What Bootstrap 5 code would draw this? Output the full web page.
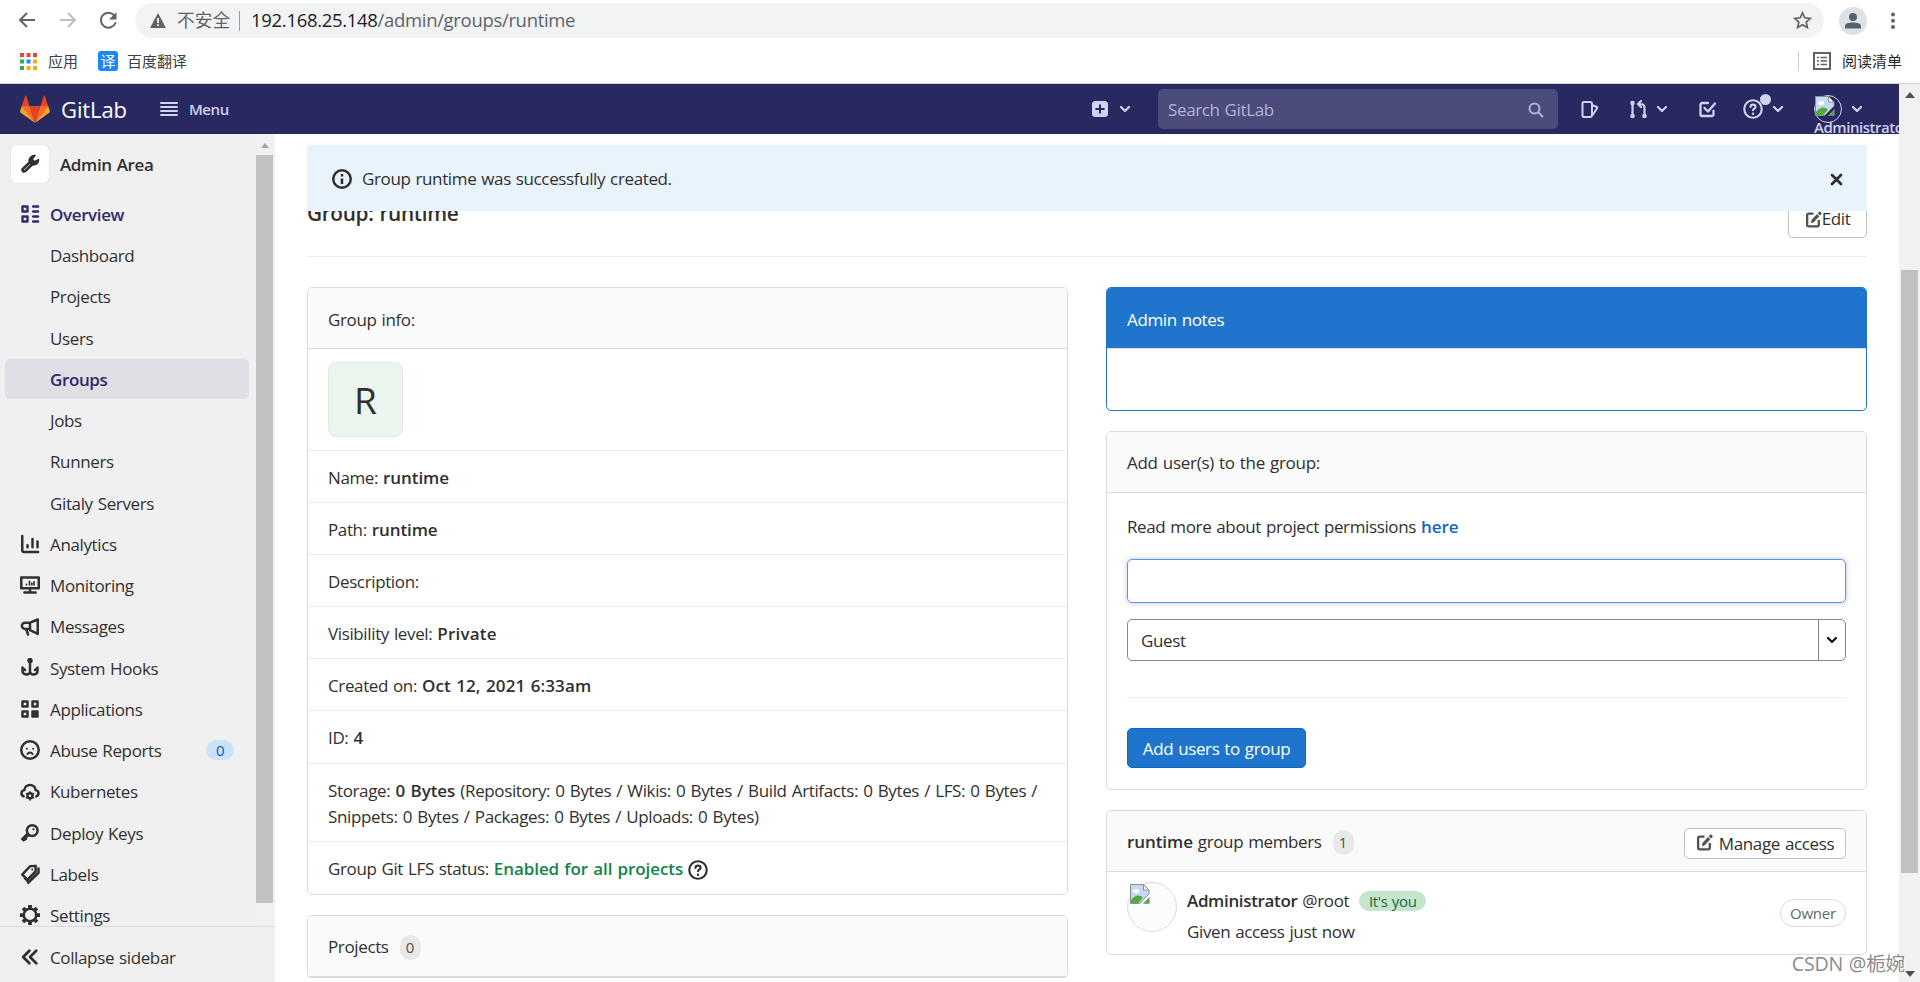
<!DOCTYPE html>
<html lang="en">
<head>
<meta charset="utf-8">
<title>runtime · Groups · Admin Area · GitLab</title>
<link href="https://cdn.jsdelivr.net/npm/bootstrap@5.3.0/dist/css/bootstrap.min.css" rel="stylesheet">
<style>
html,body{height:982px;overflow:hidden}
body{font-family:"Open Sans","Noto Sans CJK SC",sans-serif;font-size:17px;line-height:26.25px;letter-spacing:-.37px;word-spacing:.9px;color:#303030;background:#fff}
svg{display:block;flex:none}
.ln{fill:none;stroke:currentColor;stroke-width:2;stroke-linecap:round;stroke-linejoin:round}
b,.semi{font-weight:600}
b{letter-spacing:-.08px}
/* browser chrome */
.chrome-top{height:84px;border-bottom:1px solid #d4d5d8;color:#5f6368}
.tools{height:41px;padding:0 17px 0 17px}
.omni{height:35px;margin-left:16px;border-radius:18px;background:#f1f3f4;width:1689px;padding:0 12px 0 15px;font-size:18.5px;letter-spacing:-.32px}
.omni .host{color:#202124}
.omni-sep{width:1px;height:20px;background:#9a9ea2;margin:0 11px 0 9px}
.marks{height:40px;font-size:15px;color:#3c4043;letter-spacing:0;padding-left:20px;padding-right:18px}
.yi{width:20px;height:20px;border-radius:3px;background:#1a88f8;color:#fff;font-size:15px;line-height:19px}
.who{width:28px;height:28px;border-radius:50%;background:#dee1e6;margin-left:15px;margin-right:24px}
/* top bar */
.topnav{height:50px;width:1899px;background:#292961;color:#d1d1f0;overflow:hidden;padding:0 0 0 20px}
.wordmark{color:#fff;font-size:22px;width:99px;margin-left:11px;letter-spacing:-.1px;padding-top:1px}
.menu-t{font-size:15px;font-weight:600;margin-left:11px;padding-top:1px;letter-spacing:-.45px}
.finder{width:400px;height:40px;border-radius:5px;background:#4b4b7c;color:#b4b4d8;padding:2px 14px 0 10px;margin-left:27px}
.userbox{width:28px;height:28px;margin-left:30px}
.round-av{width:28px;height:28px;border:1px solid #d1d1f0;border-radius:50%}
.usertxt{position:absolute;left:0;top:19px;font-size:15px;font-weight:600;letter-spacing:-.45px}
.dot{position:absolute;width:11px;height:11px;border-radius:50%;background:#d1d1f0;left:17px;top:-5px}
/* sidebar */
.side{width:275px;height:848px;background:#f0f0f0}
.side-scroll{height:792px;overflow:hidden}
.side-list{width:256px;padding-top:11px}
.ctx{padding-left:11px;margin-bottom:11px}
.ctx-ic{width:38px;height:38px;border-radius:5px;background:#fff;box-shadow:0 0 1px #bbb;margin-right:11px}
.it{height:40px;margin:0 7px 1.25px 5px;padding:2px 0 0 15px;border-radius:5px}
.it svg{margin-right:10px;margin-top:-2px}
.it.sub{padding-left:45px}
.it.here{background:#e0dfe5}
.act{color:#2f2a6b;font-weight:600}
.zero{margin-left:auto;margin-right:15px;width:28px;height:20px;border-radius:10px;background:#cbe2f9;color:#0b5cad;font-size:15px;line-height:20px;margin-top:-2px}
.sbar{width:19px;background:#f1f1f1;padding-right:2px}
.sbar i{display:block;height:748px;background:#c1c1c1;margin-top:7px}
.tri{width:0;height:0;border:4.5px solid transparent;border-top:0;border-bottom:5px solid #a3a3a3;margin:9px auto 0}
.fold{height:56px;border-top:1px solid #dbdbdb;padding-left:20px;padding-top:7px}
.fold svg{margin-top:-3px}
/* content */
.pagebody{width:1624px;padding:11px 32px 0 32px;height:848px;overflow:hidden}
.flash{height:66px;background:#e9f3fc;padding:2px 24px 0 25px;z-index:2;position:relative}
.titlerow{height:46px;border-bottom:1px solid #ececec;margin-bottom:30px}
.titlerow h3{font-size:20.8px;font-weight:600;margin:-12px 0 0;letter-spacing:-.35px;line-height:28px}
.editb{height:38px;width:79px;margin-top:-11px;border:1px solid #bfbfbf;border-radius:5px}
.box{border:1px solid #dbdbdb;border-radius:5px;background:#fff}
.boxh{height:61px;border-bottom:1px solid #dbdbdb;background:#fafafa;padding:0 20px;border-radius:4px 4px 0 0}
.boxh.t{padding-top:3.5px}
.cols{gap:38px}
.cl{width:761px}
.rw{border-bottom:1px solid #ececec;padding:14px 20px 0;height:52.2px;white-space:nowrap}
.rw:last-child{border-bottom:0}
.ava{width:75px;height:75px;border-radius:8px;border:1px solid #e6e6e6;background:#ecf4ee;font-size:37px;letter-spacing:0;padding-top:2px}
.pill{border-radius:12px;background:#e8e8e8;height:25px;width:21px;font-size:15px;margin-left:11px;letter-spacing:0;color:#525252}
.inp{height:44px;border:1px solid #5a94f0;border-radius:5px;box-shadow:0 0 5px rgba(60,80,120,.35)}
.sel{height:42px;border:1px solid #868686;border-radius:5px;margin-top:16px;padding-left:13px}
.sel span.ar{width:27px;border-left:1px solid #868686}
.addb{width:179px;height:40px;background:#1f75cb;color:#fff;border:1px solid #1068bf;border-radius:5px;margin-top:30px;padding-top:1px}
.manb{width:162px;height:31px;border:1px solid #bfbfbf;border-radius:5px;background:#fff;margin-top:5px}
.mav{width:50px;height:50px;border:1px solid #dcdcdc;border-radius:50%;background:#fcfcfc}
.you{height:20px;width:67px;border-radius:10px;background:#c3e6cd;color:#24663b;font-size:15px;margin-left:10px}
.own{width:66px;height:28px;border:1px solid #dbdbdb;border-radius:14px;font-size:15px;color:#666;margin-top:17px;letter-spacing:-.2px}
.wm{position:absolute;right:15px;bottom:5px;font-size:19.6px;color:#8b8b8b;text-shadow:1px 1px #fff;letter-spacing:-.2px;z-index:5}
.vbar{width:21px;background:#f1f1f1;height:898px;position:absolute;right:0;top:84px}
.vbar i{display:block;width:17px;height:603px;background:#c1c1c1;margin:172px 0 0 2px}
.tu,.td{width:0;height:0;border:5px solid transparent;margin-left:6px}
.tu{border-top:0;border-bottom:6px solid #505050;margin-top:8px}
.td{border-bottom:0;border-top:6px solid #505050;margin-top:98px}
</style>
</head>
<body>
<svg width="0" height="0" style="display:none">
<symbol id="chev" viewBox="0 0 12 8"><path class="ln" style="stroke-width:2.2px" d="M2 2l4 4 4-4"/></symbol>
<symbol id="help" viewBox="0 0 16 16"><g class="ln" style="stroke-width:1.7px"><circle cx="8" cy="8" r="7"/><path d="M6 6.400C6 5.200 6.900 4.500 8 4.500s2 .8 2 1.800C10 7.700 8 7.700 8 9"/></g><circle cx="8" cy="11.700" r="1" fill="currentColor"/></symbol>
<symbol id="pen" viewBox="0 0 16 16"><path class="ln" style="stroke-linecap:butt;stroke-width:2.2px" d="M8 2.500H3.500a1.500 1.500 0 0 0-1.500 1.500v9A1.500 1.500 0 0 0 3.500 14.500h8a1.500 1.500 0 0 0 1.500-1.500V8.500"/><path fill="currentColor" d="M5.500 11.500l.6-3L11.300 2.800l2.200 2.200-5.300 5.700zM12 2.100l1.200-1.300a.9.900 0 0 1 1.300 0l.9.900a.9.900 0 0 1 0 1.300l-1.200 1.300z"/></symbol>
<symbol id="broken" viewBox="0 0 20 20"><path fill="#c3d9f7" stroke="#8e8e8e" d="M.5.500h13l5.500 5.500v4l-9.500 9.500H.5z"/><ellipse cx="6" cy="7" rx="3.300" ry="2" fill="#fff"/><path fill="#53a93a" d="M1 19v-3c4-5 8-6 12-2.500L8.500 19z"/><path fill="#fff" stroke="#8e8e8e" d="M13.500.5V6H19z"/><path fill="#53a93a" stroke="#8e8e8e" stroke-width=".6" d="M19.300 13.500v6h-6z"/></symbol>
</svg>

<div class="chrome-top">
  <div class="tools d-flex align-items-center">
    <svg width="21" height="21" viewBox="0 0 21 21" class="ln"><path d="M18 10H3M10 3l-7 7 7 7" stroke-linecap="butt" stroke-linejoin="miter"/></svg>
    <svg width="21" height="21" viewBox="0 0 21 21" class="ln" style="color:#bdc1c6;margin-left:20px"><path d="M2 10h15M10 3l7 7-7 7" stroke-linecap="butt" stroke-linejoin="miter"/></svg>
    <svg width="21" height="21" viewBox="0 0 21 21" style="margin-left:19px"><path class="ln" stroke-linecap="butt" d="M16 5.200A7.500 7.500 0 1 0 17.400 13"/><path fill="#5f6368" d="M18.500 2v7.500H11z"/></svg>
    <div class="omni d-flex align-items-center">
      <svg width="16" height="15" viewBox="0 0 16 15"><path fill="#5f6368" d="M8 0l8 15H0z"/><path stroke="#f1f3f4" stroke-width="1.800" d="M8 5v5M8 11.300v1.700"/></svg>
      <span style="font-size:17.700px;letter-spacing:0;margin-left:11px">不安全</span><i class="omni-sep"></i>
      <span><span class="host">192.168.25.148</span>/admin/groups/runtime</span>
      <svg class="ms-auto" width="19" height="19" viewBox="0 0 19 19"><path fill="none" stroke="#5f6368" stroke-width="1.700" d="M9.500 1.800l2.300 5 5.500.6-4.100 3.700 1.200 5.400-4.900-2.800-4.900 2.800 1.200-5.400L1.700 7.400l5.500-.6z"/></svg>
    </div>
    <div class="who d-flex align-items-center justify-content-center"><svg width="16" height="16" viewBox="0 0 16 16" fill="#57606f"><circle cx="8" cy="4" r="4"/><path d="M0 15.500V13c0-2.500 4-3.600 8-3.600s8 1.100 8 3.600v2.500z"/></svg></div>
    <svg width="4" height="18" viewBox="0 0 4 18" fill="#5f6368"><circle cx="2" cy="2.500" r="2"/><circle cx="2" cy="8.800" r="2"/><circle cx="2" cy="15" r="2"/></svg>
  </div>
  <div class="marks d-flex align-items-center">
    <svg width="17" height="17" viewBox="0 0 17 17"><path fill="#ea4335" d="M0 0h4v4H0zM6.500 0h4v4h-4zM13 0h4v4h-4z"/><path fill="#34a853" d="M0 6.500h4v4H0zM0 13h4v4H0z"/><path fill="#1a88f8" d="M6.500 6.500h4v4h-4z"/><path fill="#fbab05" d="M13 6.500h4v4h-4zM6.500 13h4v4h-4zM13 13h4v4h-4z"/></svg>
    <span style="margin-left:11px">应用</span>
    <span class="yi d-flex align-items-center justify-content-center" style="margin-left:20px">译</span>
    <span style="margin-left:9px">百度翻译</span>
    <span class="vr ms-auto" style="height:20px;align-self:center;margin-right:14px"></span>
    <svg width="18" height="18" viewBox="0 0 18 18"><path fill="none" stroke="#5f6368" stroke-width="2" d="M1 1h16v16H1z"/><path stroke="#5f6368" stroke-width="1.500" d="M4 5.500h2M7.500 5.500H14M4 9h2M7.500 9H14M4 12.500h2M7.500 12.500H14"/></svg>
    <span class="text-dark" style="margin-left:11px">阅读清单</span>
  </div>
</div>

<nav class="topnav d-flex align-items-center">
  <svg width="30" height="28" viewBox="0 0 30 28"><path fill="#e24329" d="M15 28l5.500-17h-11z"/><path fill="#fc6d26" d="M15 28L9.500 11H1.800zM15 28l5.500-17h7.700z"/><path fill="#fca326" d="M1.800 11L.1 16.200c-.1.500 0 1 .4 1.300L15 28zM28.200 11l1.700 5.200c.1.500 0 1-.4 1.300L15 28z"/><path fill="#e24329" d="M1.800 11h7.700L6.200.8c-.2-.5-.9-.5-1 0zM28.200 11h-7.700L23.800.8c.2-.5.9-.5 1 0z"/></svg>
  <span class="wordmark">GitLab</span>
  <svg width="18" height="14" viewBox="0 0 18 14"><path stroke="currentColor" stroke-width="2" stroke-linecap="round" d="M1 1h16M1 5h16M1 9h16M1 13h16"/></svg>
  <span class="menu-t">Menu</span>
  <svg class="ms-auto" width="16" height="16" viewBox="0 0 16 16"><rect width="16" height="16" rx="3.500" fill="currentColor"/><path stroke="#292961" stroke-width="2" d="M8 3.500v9M3.500 8h9"/></svg>
  <svg width="12" height="8" style="margin-left:11px"><use href="#chev"/></svg>
  <div class="finder d-flex align-items-center justify-content-between"><span>Search GitLab</span><svg width="16" height="16" viewBox="0 0 16 16" class="ln"><circle cx="6.500" cy="6.500" r="5"/><path d="M10.500 10.500l4 4"/></svg></div>
  <svg width="19" height="19" viewBox="0 0 19 19" class="ln" style="margin-left:22px;margin-right:2px"><path d="M4 2h6a2 2 0 0 1 2 2v11a2 2 0 0 1-2 2H4a1.500 1.500 0 0 1-1.500-1.500v-12A1.500 1.500 0 0 1 4 2z"/><path d="M13 5.500l3.500 1.300c.8.300 1 .8.600 1.500L13 14.500"/></svg>
  <svg width="19" height="19" viewBox="0 0 19 19" class="ln" style="margin-left:28px"><path stroke-width="2.200" d="M3.500 4v11M15.500 14V8c0-2.500-1.500-4-4-4h-1M12 1L9 4l3 3"/><circle cx="3.500" cy="3" r="1.300"/><circle cx="3.500" cy="16" r="1.300"/><circle cx="15.500" cy="16" r="1.300"/></svg>
  <svg width="12" height="8" style="margin-left:8px"><use href="#chev"/></svg>
  <svg width="19" height="19" viewBox="0 0 19 19" class="ln" style="margin-left:30px"><path stroke-width="2.300" d="M10 3H4a1.500 1.500 0 0 0-1.500 1.500v10A1.500 1.500 0 0 0 4 16h10a1.500 1.500 0 0 0 1.500-1.500V11M6.500 8l3.500 3.500L17 3.500"/></svg>
  <span class="position-relative" style="margin-left:26px"><svg width="20" height="20"><use href="#help"/></svg><i class="dot"></i></span>
  <svg width="12" height="8" style="margin-left:9px"><use href="#chev"/></svg>
  <span class="userbox position-relative"><span class="round-av d-block"><svg width="20" height="20"><use href="#broken"/></svg></span><span class="usertxt">Administrator</span></span>
  <svg width="12" height="8" style="margin:0 36px 0 9px"><use href="#chev"/></svg>
</nav>

<div class="d-flex">
  <aside class="side">
    <div class="side-scroll d-flex justify-content-between">
      <div class="side-list">
        <div class="ctx d-flex align-items-center semi"><span class="ctx-ic d-flex align-items-center justify-content-center"><svg width="20" height="20" viewBox="0 0 16 16"><path class="ln" d="M7.500 7L2.600 11.600c-.8.800-.8 1.400-.2 2s1.300.6 2-.2L9.200 8.800"/><path fill="currentColor" d="M9 1.300c1.300-.8 2.700-.8 3.900-.3L10.500 4l1.200 1.400 3.600-1.900c.5 2.200-.5 4.500-2.400 5.300s-3.200.6-3.900.2L6.700 6.700C6.300 4.500 7.300 2.300 9 1.300z"/></svg></span><span style="padding-top:2px">Admin Area</span></div>
        <div class="it d-flex align-items-center act"><svg width="20" height="20" viewBox="0 0 16 16" class="ln"><path d="M2 2h4v4H2zM2 10h4v4H2zM10.500 2h4M10.500 6h4M10.500 10h4M10.500 14h4" stroke-width="1.900"/></svg>Overview</div>
        <div class="it sub d-flex align-items-center">Dashboard</div>
        <div class="it sub d-flex align-items-center">Projects</div>
        <div class="it sub d-flex align-items-center">Users</div>
        <div class="it sub here d-flex align-items-center act">Groups</div>
        <div class="it sub d-flex align-items-center">Jobs</div>
        <div class="it sub d-flex align-items-center">Runners</div>
        <div class="it sub d-flex align-items-center">Gitaly Servers</div>
        <div class="it d-flex align-items-center"><svg width="20" height="20" viewBox="0 0 16 16" class="ln"><path d="M1.800 1.500V13a1.300 1.300 0 0 0 1.300 1.300h11.400M6 9v1.500M10 4v6.500M14 6v4.500"/></svg>Analytics</div>
        <div class="it d-flex align-items-center"><svg width="20" height="20" viewBox="0 0 16 16" class="ln"><path d="M1 2h14v8.500H1zM8 10.500V14M3.500 14h9"/><path stroke-width="1.300" d="M5.200 7.500v.5M7.600 5v3M9.500 6.500V8M11.200 5.500V8"/></svg>Monitoring</div>
        <div class="it d-flex align-items-center"><svg width="20" height="20" viewBox="0 0 16 16" class="ln"><path d="M8 4.500L14.200 2v11.500L8 10.500M8 4.500H4a2.300 2.300 0 0 0 0 5h4zM8 9v1.500M5 10l1.500 4"/></svg>Messages</div>
        <div class="it d-flex align-items-center"><svg width="20" height="20" viewBox="0 0 16 16" class="ln"><circle cx="8" cy="2" r="1.200" fill="currentColor"/><path d="M8 3v7.500M2 7.500V10c0 4 6 4.500 6 .5 0 4 6 3.500 6-.5V7.500M2 8l2 1.500M14 8l-2 1.500"/></svg>System Hooks</div>
        <div class="it d-flex align-items-center"><svg width="20" height="20" viewBox="0 0 16 16" class="ln"><path d="M2 2h4v4H2zM10 2h4v4h-4zM2 10h4v4H2z"/><path fill="currentColor" d="M10 10h4v4h-4z"/></svg>Applications</div>
        <div class="it d-flex align-items-center"><svg width="20" height="20" viewBox="0 0 16 16" class="ln"><circle cx="8" cy="8" r="7"/><path stroke-width="1.600" d="M5.500 7v0M10.500 7v0M6 11.200c.8-1.600 3.200-1.600 4 0"/></svg>Abuse Reports<span class="zero text-center">0</span></div>
        <div class="it d-flex align-items-center"><svg width="20" height="20" viewBox="0 0 16 16" class="ln"><path d="M3 11.500C.5 10.500.5 7 3.500 6.500 4 1 12 1 12.500 6.500c3 .5 3 4 .5 5"/><circle cx="8" cy="11" r="2"/><path stroke-width="1.300" d="M8 7.800v.7M8 13.500v.8M5.200 9.300l.7.400M10.100 12.300l.7.400M5.200 12.700l.7-.4M10.100 9.700l.7-.4"/></svg>Kubernetes</div>
        <div class="it d-flex align-items-center"><svg width="20" height="20" viewBox="0 0 16 16" class="ln"><circle cx="9.800" cy="6" r="4.300"/><circle cx="10.800" cy="5" r=".9" fill="currentColor" stroke="none"/><path stroke-width="3.200" stroke-linecap="butt" d="M7 8.500L1.600 13.900M3 11l1.500 3"/></svg>Deploy Keys</div>
        <div class="it d-flex align-items-center"><svg width="20" height="20" viewBox="0 0 16 16" class="ln"><path d="M1.800 8.500L8 1.800l4.500-.3V6L6 12.500zM6.500 15L14.800 7V3.500M4 11.500l3 3"/><circle cx="9.800" cy="4.300" r=".8" fill="currentColor" stroke="none"/></svg>Labels</div>
        <div class="it d-flex align-items-center"><svg width="20" height="20" viewBox="0 0 16 16" class="ln"><circle cx="8" cy="8" r="5"/><path stroke-width="3" stroke-linecap="butt" d="M8 0v3M8 13v3M0 8h3M13 8h3M2.400 2.400l2 2M11.600 11.600l2 2M2.400 13.600l2-2M11.600 4.400l2-2"/></svg>Settings</div>
      </div>
      <div class="sbar"><div class="tri"></div><i></i></div>
    </div>
    <div class="fold d-flex align-items-center"><svg width="20" height="20" viewBox="0 0 16 16" class="ln" style="margin-right:10px"><path stroke-width="2.200" d="M7.500 3l-5 5 5 5M13 3L8 8l5 5"/></svg>Collapse sidebar</div>
  </aside>

  <main class="pagebody">
    <div class="flash d-flex align-items-center"><svg width="20" height="20" viewBox="0 0 16 16" class="ln"><circle cx="8" cy="8" r="7"/><path stroke-linecap="butt" d="M8 7.500V12M8 4v2"/></svg><span style="margin-left:10px">Group runtime was successfully created.</span>
      <svg class="ms-auto" width="13" height="13" viewBox="0 0 13 13"><path class="ln" style="stroke-width:2.800px" d="M2 2l9 9M11 2l-9 9"/></svg></div>
    <div class="titlerow d-flex justify-content-between"><h3>Group: runtime</h3><div class="editb d-flex align-items-center justify-content-center"><svg width="17" height="17" style="color:#525252"><use href="#pen"/></svg>Edit</div></div>
    <div class="cols d-flex">
      <div class="cl">
        <div class="box">
          <div class="boxh t d-flex align-items-center">Group info:</div>
          <div class="rw" style="height:101.500px;padding-top:13px"><div class="ava d-flex align-items-center justify-content-center">R</div></div>
          <div class="rw">Name: <b>runtime</b></div>
          <div class="rw">Path: <b>runtime</b></div>
          <div class="rw">Description:</div>
          <div class="rw">Visibility level: <b style="letter-spacing:.2px">Private</b></div>
          <div class="rw">Created on: <b style="letter-spacing:.1px">Oct 12, 2021 6:33am</b></div>
          <div class="rw">ID: <b>4</b></div>
          <div class="rw" style="height:78px;word-spacing:1.100px">Storage: <b>0 Bytes</b> (Repository: 0 Bytes / Wikis: 0 Bytes / Build Artifacts: 0 Bytes / LFS: 0 Bytes /<br>Snippets: 0 Bytes / Packages: 0 Bytes / Uploads: 0 Bytes)</div>
          <div class="rw d-flex">Group Git LFS status:&nbsp;<b style="color:#108548">Enabled for all projects</b><svg width="20" height="20" style="margin:4px 0 0 5px"><use href="#help"/></svg></div>
        </div>
        <div class="box" style="margin-top:20px"><div class="boxh t d-flex align-items-center">Projects<span class="pill d-flex align-items-center justify-content-center">0</span></div></div>
      </div>
      <div class="cl">
        <div class="box" style="border-color:#1f75cb;height:124px"><div class="boxh t d-flex align-items-center text-white" style="background:#1f75cb">Admin notes</div></div>
        <div class="box" style="margin-top:20px;height:359px">
          <div class="boxh d-flex align-items-center" style="padding-top:2px"><span style="letter-spacing:-.28px">Add user(s) to the group:</span></div>
          <div style="padding:21px 20px 0">
            <div style="margin-bottom:19px">Read more about project permissions <b style="color:#1068bf">here</b></div>
            <div class="inp"></div>
            <div class="sel d-flex justify-content-between align-items-center"><span style="padding-top:2px">Guest</span><span class="ar h-100 d-flex align-items-center justify-content-center"><svg width="12" height="8" style="color:#111"><use href="#chev"/></svg></span></div>
            <div style="border-top:1px solid #ececec;margin-top:36px"></div>
            <div class="addb d-flex align-items-center justify-content-center">Add users to group</div>
          </div>
        </div>
        <div class="box" style="margin-top:20px;height:145px">
          <div class="boxh d-flex align-items-center justify-content-between"><span class="d-flex align-items-center" style="padding-top:2px"><b>runtime</b>&nbsp;group members<span class="pill d-flex align-items-center justify-content-center">1</span></span>
            <div class="manb d-flex align-items-center justify-content-center"><svg width="17" height="17" style="color:#525252;margin:-2px 6px 0 0"><use href="#pen"/></svg><span style="padding-top:2px">Manage access</span></div></div>
          <div class="d-flex align-items-start" style="padding:10px 20px 0">
            <div class="mav" style="padding:1px 0 0 2px"><svg width="20" height="20"><use href="#broken"/></svg></div>
            <div style="margin-left:10px;padding-top:6px"><div class="d-flex align-items-center" style="margin-bottom:5px"><b style="letter-spacing:-.35px">Administrator</b>&nbsp;@root<span class="you d-flex align-items-center justify-content-center">It's you</span></div><div>Given access just now</div></div>
            <div class="own ms-auto d-flex align-items-center justify-content-center">Owner</div>
          </div>
        </div>
      </div>
    </div>
  </main>
</div>
<div class="vbar"><div class="tu"></div><i></i><div class="td"></div></div>
<div class="wm">CSDN @栀婉</div>
<script src="https://cdn.jsdelivr.net/npm/bootstrap@5.3.0/dist/js/bootstrap.bundle.min.js"></script>
</body>
</html>
